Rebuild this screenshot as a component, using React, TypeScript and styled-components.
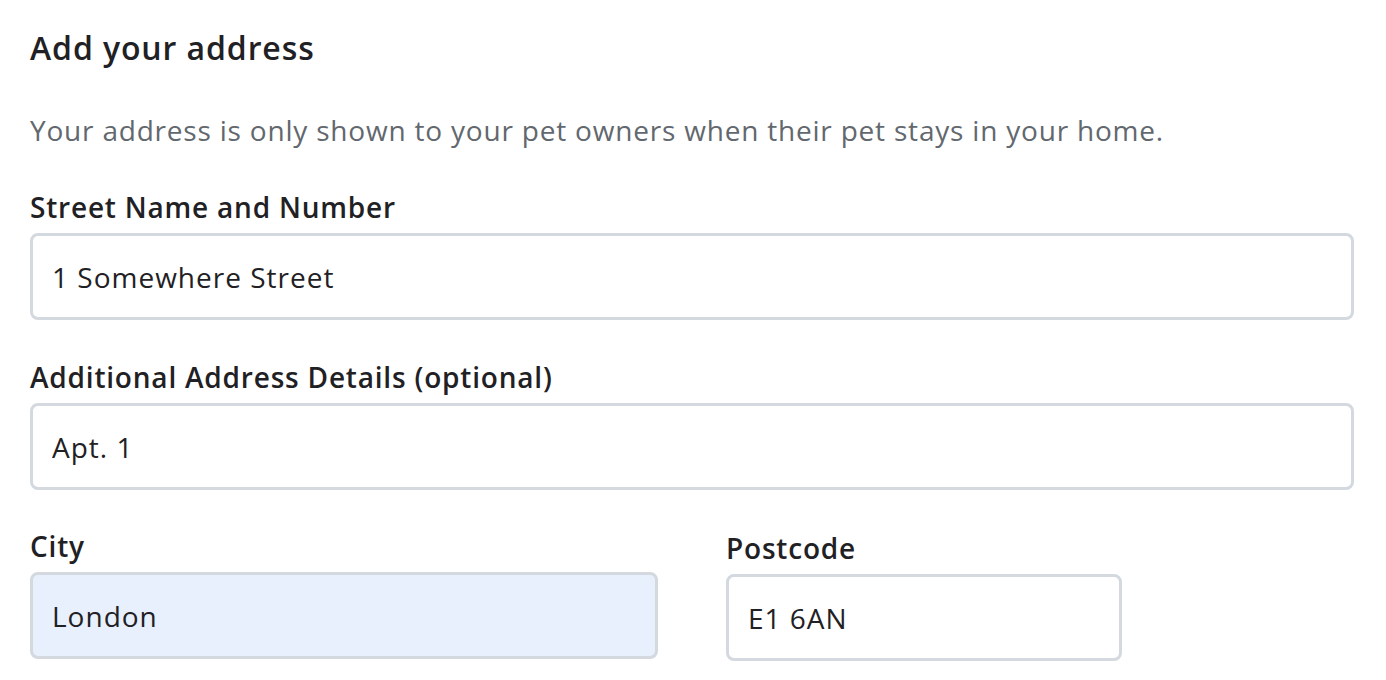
import styled, { createGlobalStyle } from 'styled-components'

const GlobalStyle = createGlobalStyle`
  html, body {
    margin: 0;
    padding: 0;
    background: #ffffff;
  }
  body {
    font-family: "Open Sans", Lato, sans-serif;
    color: #1f2124;
  }
`

const Page = styled.div`
  width: 1324px;
  padding: 28px 32px 0 30px;
`

const Heading = styled.h2`
  margin: 0;
  font-size: 32px;
  line-height: 40px;
  font-weight: 600;
  letter-spacing: 0.9px;
`

const Description = styled.p`
  margin: 44px 0 0;
  font-size: 28px;
  line-height: 36px;
  color: #62686e;
  letter-spacing: 0.8px;
`

const Field = styled.div<{ $width?: number; $top?: number }>`
  display: flex;
  flex-direction: column;
  width: ${(p) => (p.$width ? `${p.$width}px` : '100%')};
  margin-top: ${(p) => p.$top ?? 0}px;
`

const Label = styled.label`
  font-size: 28px;
  line-height: 36px;
  font-weight: 600;
  letter-spacing: 0.8px;
  margin-bottom: 8px;
`

const Input = styled.input<{ $autofill?: boolean }>`
  box-sizing: border-box;
  width: 100%;
  height: 87px;
  padding: 0 19px;
  border: 3px solid #d3d9df;
  border-radius: 8px;
  background: ${(p) => (p.$autofill ? '#e8f0fe' : '#ffffff')};
  font-family: inherit;
  font-size: 28px;
  letter-spacing: 1px;
  color: #1f2124;
  outline: none;
`

const Row = styled.div`
  display: flex;
  gap: 68px;
  margin-top: 38px;
  align-items: flex-start;
`

export default function App() {
  return (
    <>
      <GlobalStyle />
      <Page>
        <Heading>Add your address</Heading>
        <Description>
          Your address is only shown to your pet owners when their pet stays in your home.
        </Description>
        <Field $top={41}>
          <Label>Street Name and Number</Label>
          <Input defaultValue="1 Somewhere Street" />
        </Field>
        <Field $top={39}>
          <Label>Additional Address Details (optional)</Label>
          <Input defaultValue="Apt. 1" />
        </Field>
        <Row>
          <Field $width={628}>
            <Label>City</Label>
            <Input $autofill defaultValue="London" />
          </Field>
          <Field $width={396} $top={2}>
            <Label>Postcode</Label>
            <Input defaultValue="E1 6AN" />
          </Field>
        </Row>
      </Page>
    </>
  )
}
